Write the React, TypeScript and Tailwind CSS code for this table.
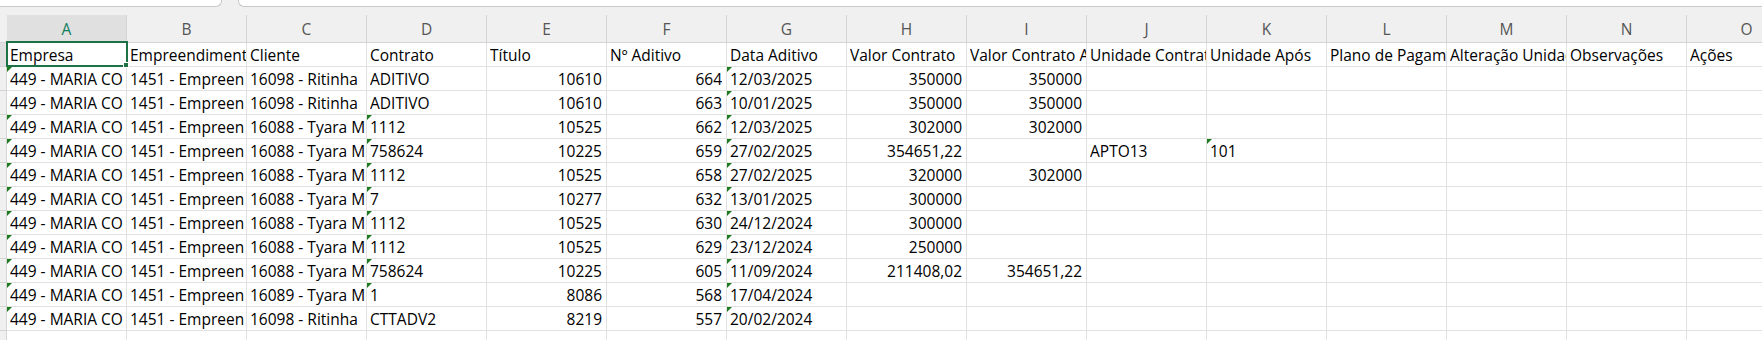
import React from "react";

type Cell = { v: string; r?: boolean; t?: boolean };

const letters = ["A", "B", "C", "D", "E", "F", "G", "H", "I", "J", "K", "L", "M", "N", "O"];

const header: Cell[] = [
  { v: "Empresa" },
  { v: "Empreendimento" },
  { v: "Cliente" },
  { v: "Contrato" },
  { v: "Título" },
  { v: "Nº Aditivo" },
  { v: "Data Aditivo" },
  { v: "Valor Contrato" },
  { v: "Valor Contrato Após" },
  { v: "Unidade Contrato" },
  { v: "Unidade Após" },
  { v: "Plano de Pagamento" },
  { v: "Alteração Unidade" },
  { v: "Observações" },
  { v: "Ações" },
];

type RowData = {
  aT: boolean;
  c: string;
  d: string;
  dT: boolean;
  e: string;
  f: string;
  g: string;
  h?: string;
  i?: string;
  j?: string;
  k?: string;
};

const rows: RowData[] = [
  { aT: true, c: "16098 - Ritinha", d: "ADITIVO", dT: false, e: "10610", f: "664", g: "12/03/2025", h: "350000", i: "350000" },
  { aT: false, c: "16098 - Ritinha", d: "ADITIVO", dT: false, e: "10610", f: "663", g: "10/01/2025", h: "350000", i: "350000" },
  { aT: true, c: "16088 - Tyara M", d: "1112", dT: true, e: "10525", f: "662", g: "12/03/2025", h: "302000", i: "302000" },
  { aT: true, c: "16088 - Tyara M", d: "758624", dT: true, e: "10225", f: "659", g: "27/02/2025", h: "354651,22", j: "APTO13", k: "101" },
  { aT: true, c: "16088 - Tyara M", d: "1112", dT: true, e: "10525", f: "658", g: "27/02/2025", h: "320000", i: "302000" },
  { aT: true, c: "16088 - Tyara M", d: "7", dT: true, e: "10277", f: "632", g: "13/01/2025", h: "300000" },
  { aT: true, c: "16088 - Tyara M", d: "1112", dT: true, e: "10525", f: "630", g: "24/12/2024", h: "300000" },
  { aT: true, c: "16088 - Tyara M", d: "1112", dT: true, e: "10525", f: "629", g: "23/12/2024", h: "250000" },
  { aT: true, c: "16088 - Tyara M", d: "758624", dT: true, e: "10225", f: "605", g: "11/09/2024", h: "211408,02", i: "354651,22" },
  { aT: true, c: "16089 - Tyara M", d: "1", dT: true, e: "8086", f: "568", g: "17/04/2024" },
  { aT: true, c: "16098 - Ritinha", d: "CTTADV2", dT: false, e: "8219", f: "557", g: "20/02/2024" },
];

function toCells(r: RowData): Cell[] {
  return [
    { v: "449 - MARIA CO", t: r.aT },
    { v: "1451 - Empreen" },
    { v: r.c },
    { v: r.d, t: r.dT },
    { v: r.e, r: true },
    { v: r.f, r: true },
    { v: r.g, t: true },
    { v: r.h ?? "", r: true },
    { v: r.i ?? "", r: true },
    { v: r.j ?? "" },
    { v: r.k ?? "", t: !!r.k },
    { v: "" },
    { v: "" },
    { v: "" },
    { v: "" },
  ];
}

function Triangle() {
  return (
    <span className="absolute left-0 top-0 h-0 w-0 border-t-[5px] border-r-[5px] border-t-[#1b7a1b] border-r-transparent" />
  );
}

function DataCell({ cell, selected }: { cell: Cell; selected?: boolean }) {
  return (
    <div
      className={`relative h-[24px] w-[120px] shrink-0 border-r border-b border-[#e1e1e1] bg-white ${
        cell.r ? "pr-[4px] text-right" : "pl-[3px] text-left"
      }`}
    >
      <div className="h-[23px] overflow-hidden whitespace-nowrap leading-[24px]">{cell.v}</div>
      {cell.t && <Triangle />}
      {selected && (
        <div className="absolute left-[-1px] top-[-2px] z-10 h-[26px] w-[122px] border-2 border-[#1e7145]">
          <div className="absolute right-[-3px] bottom-[-3px] h-[6px] w-[6px] border border-white bg-[#1e7145]" />
        </div>
      )}
    </div>
  );
}

function RowHeader({ selected }: { selected?: boolean }) {
  return (
    <div
      className={`h-[24px] w-[7px] shrink-0 border-r border-b border-[#d4d4d4] ${
        selected ? "bg-[#e0e0e0]" : "bg-[#f0f0f0]"
      }`}
    />
  );
}

export default function App() {
  return (
    <div
      className="h-[340px] w-[1762px] overflow-hidden bg-white text-[15.5px] text-black"
      style={{ fontFamily: "'Open Sans', 'Noto Sans', sans-serif" }}
    >
      {/* top boxes (name box / formula bar bottoms) */}
      <div className="flex h-[7px] bg-[#f0f0f0]">
        <div className="ml-[-10px] h-[7px] w-[232px] shrink-0 rounded-br-[6px] border-r border-b border-[#c8c8c8] bg-white" />
        <div className="ml-[16px] h-[7px] flex-1 rounded-bl-[6px] border-l border-b border-[#c8c8c8] bg-white" />
      </div>
      {/* gray gap */}
      <div className="h-[8px] bg-[#f0f0f0]" />
      {/* column letters */}
      <div className="flex h-[28px] bg-[#f0f0f0]">
        <div className="h-[28px] w-[7px] shrink-0 border-b border-[#d4d4d4]" />
        {letters.map((l, i) => (
          <div
            key={l}
            className={`flex h-[28px] w-[120px] shrink-0 items-center justify-center border-r border-b leading-[27px] ${
              i === 0
                ? "border-r-[#d4d4d4] border-b-[#1e7145] bg-[#e0e0e0] text-[#137e5f]"
                : "border-[#d4d4d4] text-[#555]"
            }`}
          >
            <span className="pt-[1px]">{l}</span>
          </div>
        ))}
      </div>
      {/* header row */}
      <div className="flex">
        <RowHeader selected />
        {header.map((c, i) => (
          <DataCell key={i} cell={c} selected={i === 0} />
        ))}
      </div>
      {rows.map((r, ri) => (
        <div key={ri} className="flex">
          <RowHeader />
          {toCells(r).map((c, i) => (
            <DataCell key={i} cell={c} />
          ))}
        </div>
      ))}
      <div className="flex">
        <RowHeader />
        {letters.map((l) => (
          <DataCell key={l} cell={{ v: "" }} />
        ))}
      </div>
    </div>
  );
}
